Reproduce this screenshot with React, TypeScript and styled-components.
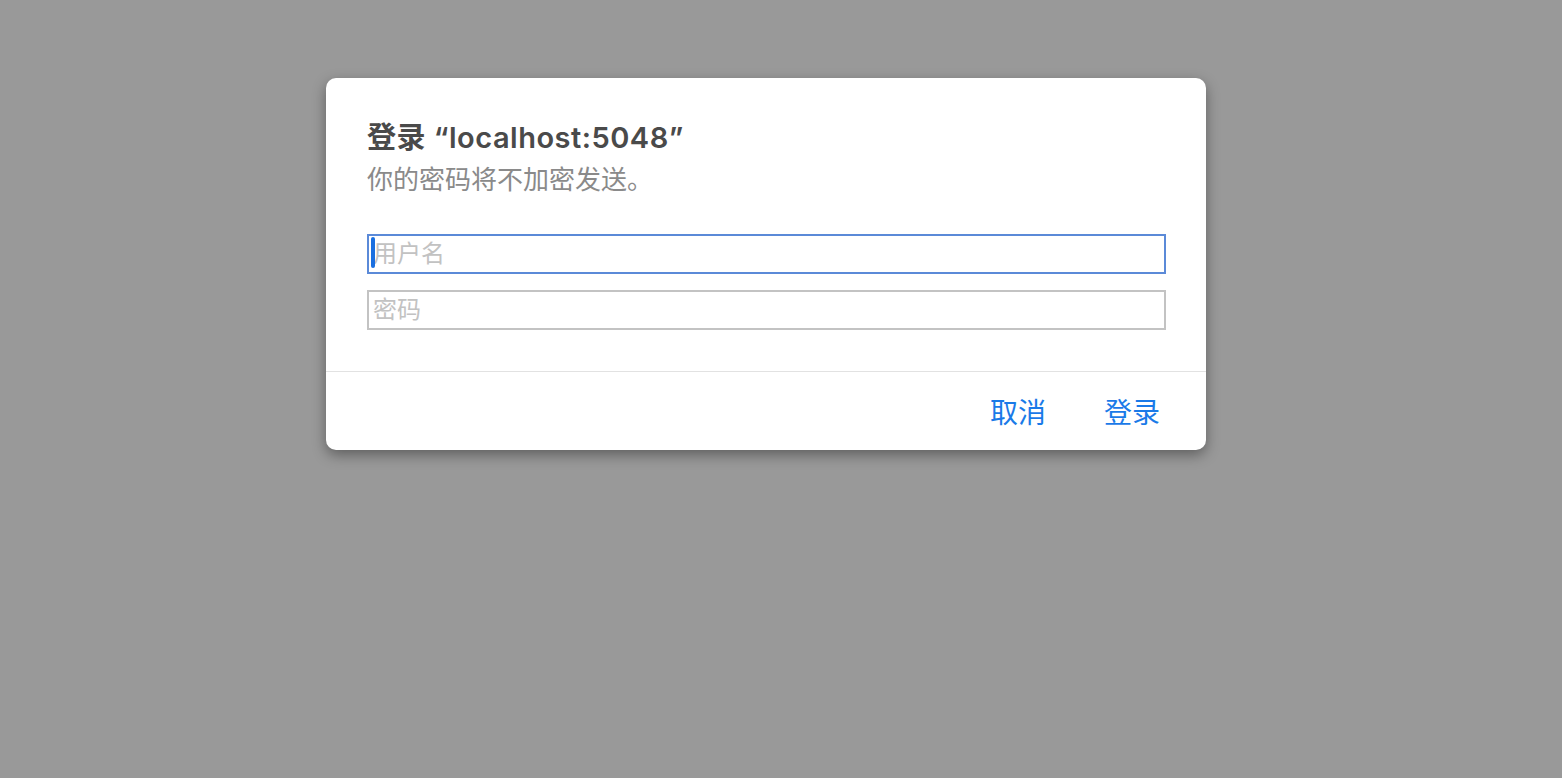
import { createGlobalStyle, styled } from "styled-components";

const GlobalStyle = createGlobalStyle`
    html, body {
        margin: 0;
        padding: 0;
        background: #999999;
        font-family: "Liberation Sans", "Noto Sans CJK SC", sans-serif;
    }
`;

const Backdrop = styled.div`
    width: 100vw;
    height: 100vh;
    display: flex;
    justify-content: center;
    align-items: flex-start;
    padding-top: 78px;
    box-sizing: border-box;
    background: #999999;
`;

const Dialog = styled.div`
    width: 880px;
    background: #ffffff;
    border-radius: 10px;
    box-shadow: 0 5px 14px rgba(0, 0, 0, 0.38);
    display: flex;
    flex-direction: column;
    margin-left: -30px;
`;

const Body = styled.div`
    padding: 43px 40px 41px 41px;
    display: flex;
    flex-direction: column;
`;

const Title = styled.h2`
    margin: 0;
    font-family: "Inter", "Noto Sans CJK SC", sans-serif;
    font-size: 29px;
    line-height: 34px;
    font-weight: 600;
    letter-spacing: 0.5px;
    color: #4a4a4a;
`;

const Subtitle = styled.p`
    margin: 10px 0 0;
    font-size: 26px;
    line-height: 30px;
    color: #8a8a8a;
`;

const Fields = styled.div`
    margin-top: 39px;
    display: flex;
    flex-direction: column;
    gap: 16px;
`;

const FieldBox = styled.div<{ $focused?: boolean }>`
    position: relative;
    height: 40px;
    box-sizing: border-box;
    border: 2px solid ${(p) => (p.$focused ? "#5b8ad8" : "#c3c3c3")};
    display: flex;
    align-items: center;
`;

const Field = styled.input`
    flex: 1;
    border: none;
    outline: none;
    background: transparent;
    height: 100%;
    padding: 0 0 0 4px;
    font-family: "Liberation Sans", "Noto Sans CJK SC", sans-serif;
    font-size: 24px;
    color: #333;
    caret-color: transparent;
    &::placeholder {
        color: #c2c2c2;
    }
`;

const Caret = styled.span`
    position: absolute;
    left: 2px;
    top: 1px;
    width: 4px;
    height: 31px;
    border-radius: 2px;
    background: #1a6fe0;
`;

const Divider = styled.div`
    height: 1px;
    background: #e2e2e2;
`;

const Footer = styled.div`
    height: 78px;
    display: flex;
    justify-content: flex-end;
    align-items: center;
    gap: 58px;
    padding: 6px 46px 0 0;
    box-sizing: border-box;
`;

const Action = styled.button`
    border: none;
    background: none;
    padding: 0;
    cursor: pointer;
    font-family: "Liberation Sans", "Noto Sans CJK SC", sans-serif;
    font-size: 28px;
    line-height: 34px;
    color: #1a7ae8;
`;

export default function App() {
    return (
        <>
            <GlobalStyle />
            <Backdrop>
                <Dialog>
                    <Body>
                        <Title>登录 “localhost:5048”</Title>
                        <Subtitle>你的密码将不加密发送。</Subtitle>
                        <Fields>
                            <FieldBox $focused>
                                <Caret />
                                <Field placeholder="用户名" />
                            </FieldBox>
                            <FieldBox>
                                <Field type="password" placeholder="密码" />
                            </FieldBox>
                        </Fields>
                    </Body>
                    <Divider />
                    <Footer>
                        <Action>取消</Action>
                        <Action>登录</Action>
                    </Footer>
                </Dialog>
            </Backdrop>
        </>
    );
}
